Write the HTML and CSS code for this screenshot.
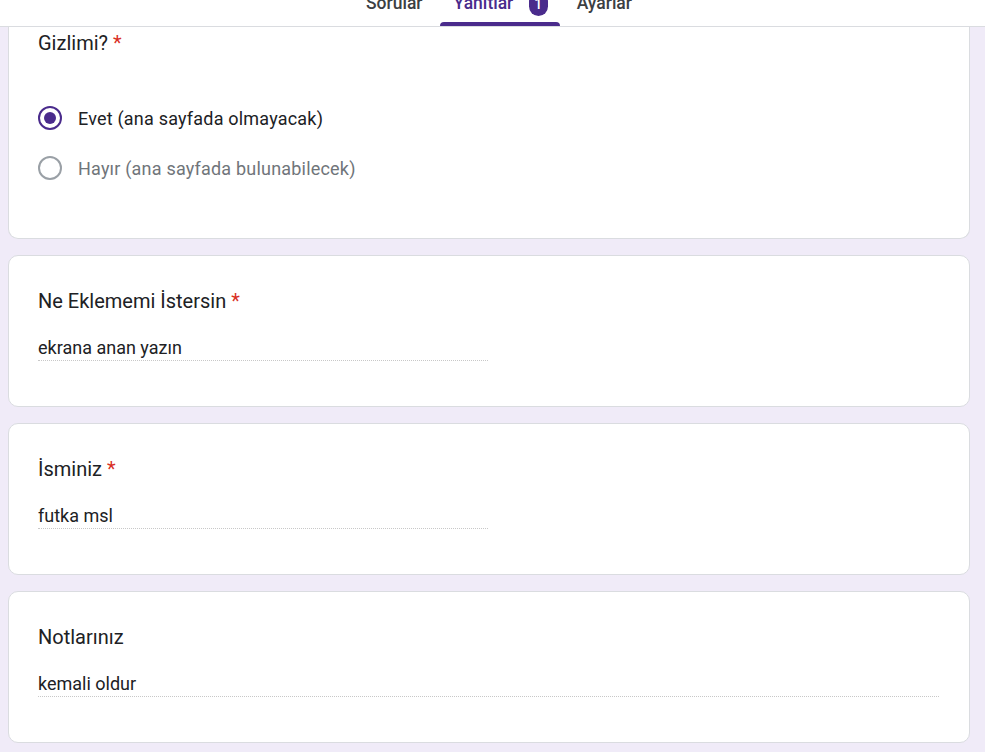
FILE: index.html
```html
<!DOCTYPE html>
<html lang="tr">
<head>
  <meta charset="utf-8">
  <link rel="stylesheet" href="styles.css">
  <title>Yanıtlar</title>
</head>
<body>

  <div class="topbar">
    <div class="tabs">
      <div class="tab">Sorular</div>
      <div class="tab active">Yanıtlar <span class="badge">1</span></div>
      <div class="tab">Ayarlar</div>
    </div>
  </div>

  <div class="list">
    <div class="card first">
      <div class="title">Gizlimi? <span class="req">*</span></div>
      <div class="options">
        <div class="option">
          <span class="radio on"></span>
          <span class="label">Evet (ana sayfada olmayacak)</span>
        </div>
        <div class="option">
          <span class="radio"></span>
          <span class="label muted">Hayır (ana sayfada bulunabilecek)</span>
        </div>
      </div>
    </div>

    <div class="card">
      <div class="title">Ne Eklememi İstersin <span class="req">*</span></div>
      <div class="answer">ekrana anan yazın</div>
    </div>

    <div class="card">
      <div class="title">İsminiz <span class="req">*</span></div>
      <div class="answer">futka msl</div>
    </div>

    <div class="card">
      <div class="title">Notlarınız</div>
      <div class="answer wide">kemali oldur</div>
    </div>
  </div>

</body>
</html>
```

FILE: styles.css
```css
body {
  margin: 0;
  background-color: #f0ebf8;
  font-family: Roboto, 'Liberation Sans', sans-serif;
  color: #202124;
}

.topbar {
  height: 26px;
  background: #fff;
  border-bottom: 1px solid #dadce0;
  overflow: hidden;
}

.tabs {
  display: flex;
  justify-content: center;
  padding-left: 13px;
  margin-top: -15px;
  gap: 3px;
}

.tab {
  position: relative;
  height: 41px;
  padding: 0 14px;
  line-height: 36px;
  font-size: 17.5px;
  font-weight: 500;
  color: #3c4043;
}

.tab.active {
  color: #4a2b8c;
  padding: 0 12px 0 14px;
}

.tab.active::after {
  content: "";
  position: absolute;
  left: 0;
  right: 0;
  bottom: 0;
  height: 4px;
  background: #4a2b8c;
  border-radius: 4px 4px 0 0;
}

.badge {
  display: inline-block;
  width: 19px;
  height: 24px;
  margin-left: 11px;
  border-radius: 10px;
  background: #4a2b8c;
  color: #fff;
  font-size: 14px;
  line-height: 24px;
  text-align: center;
  vertical-align: middle;
}

.list {
  display: flex;
  flex-direction: column;
  gap: 16px;
  margin: 0 15px 0 8px;
  padding-bottom: 10px;
}

.card {
  background: #fff;
  border: 1px solid #dadce0;
  border-radius: 10px;
  padding: 30px 30px 45px 29px;
}

.card.first {
  border-top: none;
  border-radius: 0 0 10px 10px;
  padding-top: 1px;
}

.title {
  font-size: 20px;
  line-height: 30px;
  color: #202124;
}

.req {
  color: #d93025;
}

.options {
  margin-top: 35px;
}

.option {
  display: flex;
  align-items: center;
  height: 50px;
}

.radio {
  box-sizing: border-box;
  width: 24px;
  height: 24px;
  border: 2.5px solid #9aa0a6;
  border-radius: 50%;
  margin-right: 16px;
  display: flex;
  align-items: center;
  justify-content: center;
}

.radio.on {
  border-color: #4a2b8c;
}

.radio.on::before {
  content: "";
  width: 12px;
  height: 12px;
  border-radius: 50%;
  background: #4a2b8c;
}

.label {
  font-size: 18px;
  letter-spacing: 0.2px;
  color: #202124;
}

.label.muted {
  color: #70757a;
}

.answer {
  margin-top: 20px;
  width: 450px;
  font-size: 18px;
  line-height: 24px;
  border-bottom: 1px dotted #c8c8c8;
}

.answer.wide {
  width: auto;
}
```
